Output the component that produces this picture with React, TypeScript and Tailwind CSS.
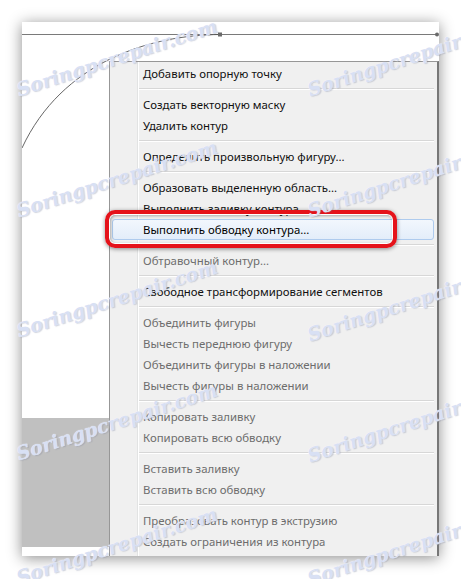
import React from 'react';

type Entry = { label?: string; off?: boolean; hot?: boolean; sep?: boolean };

const items: Entry[] = [
  { label: 'Добавить опорную точку' },
  { sep: true },
  { label: 'Создать векторную маску' },
  { label: 'Удалить контур' },
  { sep: true },
  { label: 'Определить произвольную фигуру...' },
  { sep: true },
  { label: 'Образовать выделенную область...' },
  { label: 'Выполнить заливку контура...' },
  { label: 'Выполнить обводку контура...', hot: true },
  { sep: true },
  { label: 'Обтравочный контур...', off: true },
  { sep: true },
  { label: 'Свободное трансформирование сегментов' },
  { sep: true },
  { label: 'Объединить фигуры', off: true },
  { label: 'Вычесть переднюю фигуру', off: true },
  { label: 'Объединить фигуры в наложении', off: true },
  { label: 'Вычесть фигуры в наложении', off: true },
  { sep: true },
  { label: 'Копировать заливку', off: true },
  { label: 'Копировать всю обводку', off: true },
  { sep: true },
  { label: 'Вставить заливку', off: true },
  { label: 'Вставить всю обводку', off: true },
  { sep: true },
  { label: 'Преобразовать контур в экструзию', off: true },
  { label: 'Создать ограничения из контура', off: true },
];

const marks = [
  'left-[12px] top-[47px]',
  'left-[303px] top-[47px]',
  'left-[12px] top-[168px]',
  'left-[303px] top-[168px]',
  'left-[12px] top-[288px]',
  'left-[303px] top-[292px]',
  'left-[12px] top-[411px]',
  'left-[303px] top-[413px]',
  'left-[12px] top-[535px]',
  'left-[303px] top-[536px]',
];

function ContextMenu() {
  return (
    <div className="relative w-[330px] border-t border-l border-r-2 border-t-[#979797] border-l-[#979797] border-r-[#777] pt-px text-[11.4px] bg-[linear-gradient(to_right,#f0f0f0_27px,#e2e3e3_27px,#e2e3e3_28px,#ffffff_28px,#ffffff_29px,#f0f0f0_29px)]">
      {items.map((it, i) =>
        it.sep ? (
          <div key={i} className="h-[10px] flex items-center pl-[29px] pr-[3px]">
            <div className="w-full h-[2px] border-t border-t-[#d7d7d7] border-b border-b-white" />
          </div>
        ) : it.hot ? (
          <div key={i} className="h-[21px] pl-[2px] pr-[3px]">
            <div className="h-full flex items-center pl-[30px] rounded-[3px] border border-[#aecbee] bg-[linear-gradient(#f2f7fd,#e3edfa)] text-black">
              {it.label}
            </div>
          </div>
        ) : (
          <div
            key={i}
            className={
              'h-[21px] flex items-center pl-[33px] ' + (it.off ? 'text-[#6d6d6d]' : 'text-[#111]')
            }
          >
            {it.label}
          </div>
        )
      )}
    </div>
  );
}

export default function App() {
  return (
    <div className="relative w-[461px] h-[579px] bg-white overflow-hidden font-['Noto_Sans',sans-serif] text-[12px]">
      <div className="pt-[22px] pl-[22px]">
        <div className="relative w-[417px] h-[534px] bg-white overflow-hidden flex flex-col shadow-[0_2px_14px_rgba(0,0,0,0.45)]">
          <svg className="absolute inset-0" width="417" height="534" viewBox="22 22 417 534">
            <line x1="22" y1="34.5" x2="437" y2="34.5" stroke="#7a7a7a" strokeWidth="1" />
            <path d="M220 34.5 C 150 35, 62 62, 22 148" fill="none" stroke="#555" strokeWidth="0.9" />
            <rect x="218" y="32.5" width="4" height="4" fill="#6a6a6a" />
            <circle cx="437" cy="34.5" r="2" fill="#6a6a6a" />
          </svg>
          <div className="h-[39px] shrink-0" />
          <div className="relative flex flex-1 min-h-0">
            <div className="w-[87px] shrink-0 flex flex-col">
              <div className="h-[357px]" />
              <div className="h-[129px] bg-[#c0c0c0]" />
            </div>
            <ContextMenu />
          </div>
        </div>
      </div>

      <div className="absolute z-20 left-[105px] top-[210px] w-[292px] h-[38px] rounded-[10px] border-4 border-[#e5121a] shadow-[0_1px_4px_rgba(0,0,0,0.45),inset_0_0_0_1px_#fff,inset_1px_1px_3px_1px_rgba(0,0,0,0.3)]" />

      {marks.map((pos, i) => (
        <div
          key={i}
          className={
            'absolute z-30 w-[200px] text-center -rotate-[18deg] pointer-events-none font-["DejaVu_Serif",serif] italic font-bold text-[19px] leading-[24px] text-[#d8e0f4] [text-shadow:1px_1px_1px_rgba(80,90,130,0.25),0_0_1px_#fff] ' +
            pos
          }
        >
          Soringpcrepair.com
        </div>
      ))}
    </div>
  );
}
